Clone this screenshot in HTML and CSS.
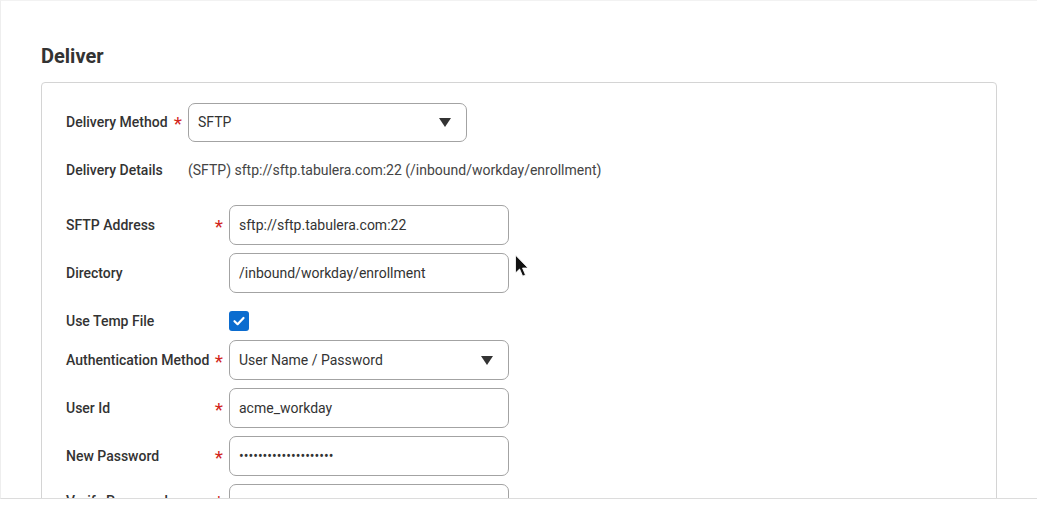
FILE: index.html
```html
<!DOCTYPE html>
<html lang="en">
<head>
<meta charset="utf-8">
<title>Deliver</title>
<link rel="stylesheet" href="styles.css">
</head>
<body>
<div class="panel">
  <h2 class="title">Deliver</h2>
  <section class="card">
    <div class="group group-method">
      <div class="row">
        <label class="label">Delivery Method<span class="req">*</span></label>
        <div class="field select">
          <span class="field-text">SFTP</span>
          <svg class="caret" width="12" height="9" viewBox="0 0 12 9"><polygon points="0,0 12,0 6,9" fill="#333"/></svg>
        </div>
      </div>
      <div class="row">
        <span class="label">Delivery Details</span>
        <span class="value">(SFTP) sftp://sftp.tabulera.com:22 (/inbound/workday/enrollment)</span>
      </div>
    </div>

    <div class="group group-sftp">
      <div class="row">
        <label class="label">SFTP Address<span class="req">*</span></label>
        <input class="field" type="text" value="sftp://sftp.tabulera.com:22">
      </div>
      <div class="row">
        <label class="label">Directory</label>
        <input class="field" type="text" value="/inbound/workday/enrollment">
      </div>
      <div class="row row-check">
        <label class="label">Use Temp File</label>
        <span class="checkbox">
          <svg width="20" height="20" viewBox="0 0 20 20"><polyline points="5.5,10.2 8.6,13.2 14.5,7" fill="none" stroke="#fff" stroke-width="2.2" stroke-linecap="round" stroke-linejoin="round"/></svg>
        </span>
      </div>
      <div class="row">
        <label class="label">Authentication Method<span class="req">*</span></label>
        <div class="field select">
          <span class="field-text">User Name / Password</span>
          <svg class="caret" width="12" height="9" viewBox="0 0 12 9"><polygon points="0,0 12,0 6,9" fill="#333"/></svg>
        </div>
      </div>
      <div class="row">
        <label class="label">User Id<span class="req">*</span></label>
        <input class="field" type="text" value="acme_workday">
      </div>
      <div class="row">
        <label class="label">New Password<span class="req">*</span></label>
        <input class="field" type="password" value="acmeworkdaysecret123">
      </div>
      <div class="row row-last">
        <label class="label">Verify Password<span class="req">*</span></label>
        <input class="field" type="password" value="">
      </div>
    </div>
  </section>

  <svg class="cursor" width="16" height="24" viewBox="0 0 14 22">
    <path d="M1 1 L1 17.5 L4.8 13.8 L7.6 20.3 L10.2 19.2 L7.5 12.9 L12.6 12.9 Z" fill="#111" stroke="#fff" stroke-width="0.8"/>
  </svg>
</div>
</body>
</html>
```

FILE: styles.css
```css
* {
  box-sizing: border-box;
}

html, body {
  margin: 0;
  background: #fff;
}

body {
  font-family: Roboto, "Liberation Sans", Arial, sans-serif;
  color: #333;
  font-size: 14px;
}

.panel {
  position: relative;
  height: 499px;
  overflow: hidden;
  border-left: 1px solid #eeeeee;
  border-top: 1px solid #f2f2f2;
  border-bottom: 1px solid #dcdcdc;
  padding: 0 40px 0 40px;
}

.title {
  margin: 43px 0 14px;
  font-size: 20px;
  line-height: 24px;
  font-weight: 700;
  color: #333;
}

.card {
  border: 1px solid #d4d4d4;
  border-radius: 4px;
  padding: 19px 24px;
  min-height: 600px;
}

.group {
  display: flex;
  flex-direction: column;
  gap: 8px;
}

.group-sftp {
  margin-top: 15px;
}

.row {
  display: flex;
  align-items: center;
  min-height: 40px;
}

.row-check {
  min-height: 31px;
  padding-top: 8px;
}

/* the last row sits under the fold; its label rides slightly high */
.row-last {
  align-items: flex-start;
}

.row-last .label {
  padding-top: 7px;
}

.label {
  display: flex;
  align-items: center;
  justify-content: space-between;
  flex: none;
  font-weight: 500;
  color: #333;
  line-height: 20px;
}

.group-method .label {
  width: 122px;
}

.group-sftp .label {
  width: 163px;
}

.req {
  color: #d2261c;
  font-size: 19px;
  line-height: 1;
  font-weight: 400;
  margin-right: 6px;
  transform: translateY(1px);
}

.value {
  color: #444;
}

.field {
  display: flex;
  align-items: center;
  justify-content: space-between;
  width: 280px;
  height: 40px;
  margin: 0;
  padding: 0 9px;
  border: 1px solid #a3a3a3;
  border-radius: 7px;
  background: #fff;
  font-family: inherit;
  font-size: 14px;
  color: #333;
  outline: none;
}

.select {
  padding-right: 15px;
}

.group-method .select {
  width: 279px;
  height: 39px;
}

.caret {
  display: block;
  flex: none;
}

.checkbox {
  display: block;
  width: 20px;
  height: 20px;
  border-radius: 3px;
  background: #0b6ccf;
}

.checkbox svg {
  display: block;
}

.cursor {
  position: absolute;
  left: 513px;
  top: 253px;
}
```
